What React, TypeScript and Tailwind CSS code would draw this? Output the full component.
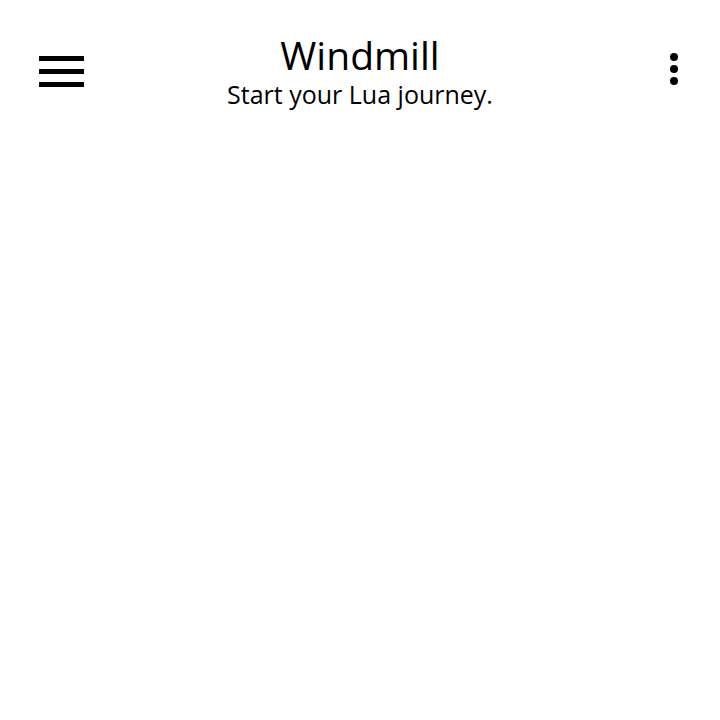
export default function App() {
  return (
    <div className="h-[720px] w-[720px] bg-white text-black" style={{ fontFamily: '"Open Sans", "Noto Sans", sans-serif' }}>
      <header className="grid grid-cols-[1fr_auto_1fr] items-start px-[39px] pt-[32px]">
        <button type="button" className="mt-[24px] flex w-[45px] flex-col gap-[8px]" aria-label="Menu">
          <span className="h-[5px] w-full bg-black" />
          <span className="h-[5px] w-full bg-black" />
          <span className="h-[5px] w-full bg-black" />
        </button>

        <div className="flex flex-col items-center">
          <h1 className="text-[39px] leading-[46px]">Windmill</h1>
          <p className="text-[25px] leading-[32px]">Start your Lua journey.</p>
        </div>

        <button type="button" className="mt-[21px] mr-[-2px] flex w-[18px] flex-col items-center gap-[4px] justify-self-end" aria-label="More">
          <span className="h-[8px] w-[8px] rounded-full bg-black" />
          <span className="h-[8px] w-[8px] rounded-full bg-black" />
          <span className="h-[8px] w-[8px] rounded-full bg-black" />
        </button>
      </header>
    </div>
  );
}
